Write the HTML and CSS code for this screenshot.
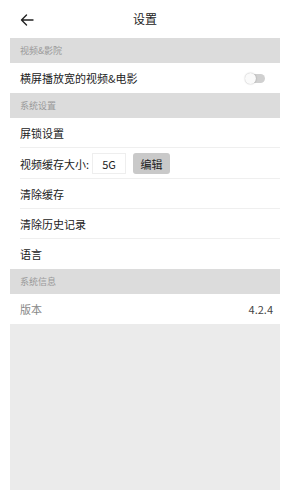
FILE: index.html
```html
<!DOCTYPE html>
<html lang="zh">
<head>
<meta charset="utf-8">
<title>设置</title>
<link rel="stylesheet" href="styles.css">
</head>
<body>
<div class="page">
  <header class="topbar">
    <svg class="back" width="14" height="12" viewBox="0 0 14 12" fill="none" stroke="#222" stroke-width="1.4" stroke-linecap="round" stroke-linejoin="round"><path d="M13 6H1.5M6.5 1 1.5 6l5 5"/></svg>
    <h1 class="title">设置</h1>
  </header>

  <div class="section">视频&amp;影院</div>
  <div class="row">
    <span>横屏播放宽的视频&amp;电影</span>
    <span class="toggle"><span class="knob"></span></span>
  </div>

  <div class="section">系统设置</div>
  <div class="row line">屏锁设置</div>
  <div class="row line tall">
    <span>视频缓存大小:</span>
    <span class="size">5G</span>
    <span class="btn">编辑</span>
  </div>
  <div class="row line">清除缓存</div>
  <div class="row line">清除历史记录</div>
  <div class="row">语言</div>

  <div class="section">系统信息</div>
  <div class="row info">
    <span>版本</span>
    <span class="ver">4.2.4</span>
  </div>

  <div class="filler"></div>
</div>
</body>
</html>
```

FILE: styles.css
```css
html, body {
  margin: 0;
  padding: 0;
  background: #fff;
}
body {
  font-family: "Noto Sans CJK SC", "Noto Sans", sans-serif;
  color: #222;
}
.page {
  width: 270px;
  height: 490px;
  margin-left: 10px;
  display: flex;
  flex-direction: column;
  background: #fff;
}
.topbar {
  height: 38px;
  flex: none;
  position: relative;
  display: flex;
  align-items: center;
  justify-content: center;
}
.back {
  position: absolute;
  left: 10px;
  top: 14px;
}
.title {
  margin: 0;
  font-size: 12px;
  font-weight: normal;
  color: #222;
  line-height: 1;
}
.section {
  height: 25px;
  flex: none;
  background: #dcdcdc;
  color: #999;
  font-size: 9px;
  line-height: 25px;
  padding-left: 10px;
}
.row {
  height: 30px;
  flex: none;
  box-sizing: border-box;
  display: flex;
  align-items: center;
  padding: 0 7px 0 10px;
  font-size: 11px;
  color: #222;
  position: relative;
}
.row.tall {
  height: 31px;
}
.row.line::after {
  content: "";
  position: absolute;
  left: 10px;
  right: 0;
  bottom: 0;
  height: 1px;
  background: #efefef;
}
.row > span:first-child {
  flex: none;
}
.toggle {
  margin-left: auto;
  margin-right: 8px;
  width: 19px;
  height: 9px;
  border-radius: 5px;
  background: #d0d0d0;
  position: relative;
}
.knob {
  position: absolute;
  left: -1px;
  top: -1px;
  width: 11px;
  height: 11px;
  border-radius: 50%;
  background: #fafafa;
  box-shadow: 0 0 1.5px rgba(0,0,0,0.35);
}
.size {
  margin-left: 3px;
  width: 34px;
  height: 21px;
  box-sizing: border-box;
  border: 1px solid #eee;
  display: flex;
  align-items: center;
  justify-content: center;
  font-size: 11px;
}
.btn {
  margin-left: 7px;
  width: 37px;
  height: 21px;
  border-radius: 3px;
  background: #c9c9c9;
  display: flex;
  align-items: center;
  justify-content: center;
  font-size: 11px;
  color: #222;
}
.info {
  color: #888;
}
.ver {
  margin-left: auto;
  color: #444;
  font-size: 11px;
}
.filler {
  flex: 1;
  background: #ebebeb;
}
```
